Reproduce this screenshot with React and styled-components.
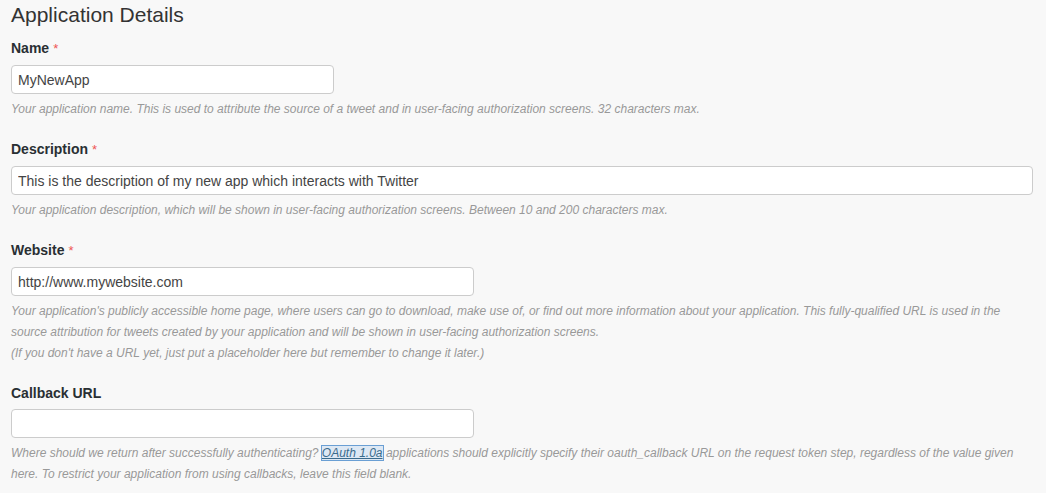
import React from "react";
import styled, { createGlobalStyle } from "styled-components";

const GlobalStyle = createGlobalStyle`
  html, body {
    margin: 0;
    padding: 0;
    background: #f8f8f8;
  }
  body {
    font-family: "Liberation Sans", Arial, sans-serif;
    color: #333;
  }
`;

const Page = styled.div`
  padding: 3px 13px 0 11px;
`;

const Title = styled.h2`
  margin: 0 0 11px;
  font-size: 21px;
  line-height: 24px;
  font-weight: normal;
  color: #333;
`;

const Field = styled.div`
  margin-bottom: 19px;
`;

const Label = styled.label`
  display: block;
  font-size: 14px;
  line-height: 20px;
  font-weight: bold;
  color: #292f33;
  margin-bottom: 6px;
`;

const Required = styled.span`
  color: #ee5555;
  font-weight: normal;
  font-size: 13px;
  margin-left: 4px;
`;

const Input = styled.input`
  display: block;
  box-sizing: border-box;
  width: ${(p) => p.$width || "100%"};
  height: 29px;
  padding: 4px 6px;
  border: 1px solid #ccc;
  border-radius: 4px;
  background: #fff;
  font-family: "Liberation Sans", Arial, sans-serif;
  font-size: 14px;
  color: #444;
  outline: none;
`;

const Help = styled.p`
  margin: 5px 0 0;
  font-size: 12px;
  line-height: 21px;
  font-style: italic;
  color: #999;
`;

const Link = styled.a`
  color: #3a6b8c;
  text-decoration: underline;
  background: #dde8f4;
  outline: 1px solid #6a9fd4;
`;

const fields = [
  {
    label: "Name",
    required: true,
    value: "MyNewApp",
    width: "323px",
    help: "Your application name. This is used to attribute the source of a tweet and in user-facing authorization screens. 32 characters max.",
  },
  {
    label: "Description",
    required: true,
    value: "This is the description of my new app which interacts with Twitter",
    help: "Your application description, which will be shown in user-facing authorization screens. Between 10 and 200 characters max.",
  },
  {
    label: "Website",
    required: true,
    value: "http://www.mywebsite.com",
    width: "463px",
    help: (
      <>
        Your application's publicly accessible home page, where users can go to download, make use of, or find out more information about your application. This fully-qualified URL is used in the source attribution for tweets created by your application and will be shown in user-facing authorization screens.
        <br />
        (If you don't have a URL yet, just put a placeholder here but remember to change it later.)
      </>
    ),
  },
  {
    label: "Callback URL",
    value: "",
    width: "463px",
    help: (
      <>
        Where should we return after successfully authenticating? <Link href="#">OAuth 1.0a</Link> applications should explicitly specify their oauth_callback URL on the request token step, regardless of the value given here. To restrict your application from using callbacks, leave this field blank.
      </>
    ),
  },
];

const App = () => {
  return (
    <Page>
      <GlobalStyle />
      <Title>Application Details</Title>
      {fields.map((f) => (
        <Field key={f.label}>
          <Label>
            {f.label}
            {f.required && <Required>*</Required>}
          </Label>
          <Input $width={f.width} defaultValue={f.value} />
          <Help>{f.help}</Help>
        </Field>
      ))}
    </Page>
  );
};

export default App;
